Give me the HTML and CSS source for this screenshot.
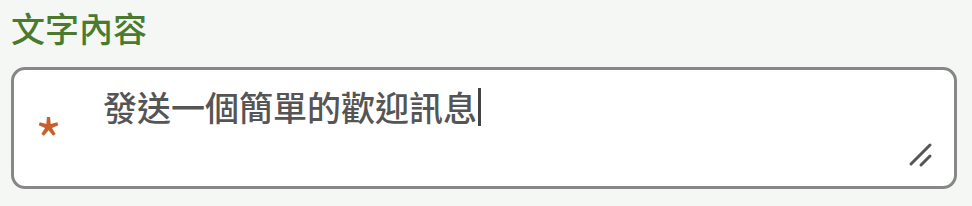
FILE: index.html
```html
<!DOCTYPE html>
<html lang="zh-Hant">
<head>
<meta charset="utf-8">
<link rel="stylesheet" href="styles.css">
</head>
<body>
<div class="field">
  <div class="label">文字內容</div>
  <div class="box">
    <span class="req">*</span>
    <div class="value">發送一個簡單的歡迎訊息<span class="caret"></span></div>
    <svg class="grip" width="26" height="26" viewBox="0 0 26 26">
      <line x1="3" y1="22" x2="22" y2="3" stroke="#555" stroke-width="3" stroke-linecap="round"/>
      <line x1="13" y1="23" x2="22" y2="14" stroke="#555" stroke-width="3" stroke-linecap="round"/>
    </svg>
  </div>
</div>
</body>
</html>
```
FILE: styles.css
```css
html, body { margin: 0; padding: 0; }
body {
  background: #f5f7f4;
  width: 972px;
  height: 206px;
  font-family: "Noto Sans CJK TC", "Noto Sans", sans-serif;
}
.field { padding: 7px 15px 0 11px; }
.label {
  color: #4a7a2e;
  font-size: 34px;
  font-weight: 500;
  line-height: 42px;
}
.box {
  position: relative;
  margin-top: 18px;
  height: 116px;
  border: 3px solid #878787;
  border-radius: 14px;
  background: #fff;
  display: flex;
  align-items: flex-start;
}
.req {
  color: #c8602e;
  font-size: 58px;
  font-weight: 400;
  margin: 43px 0 0 21px;
  line-height: 50px;
  width: 26px;
}
.value {
  color: #555;
  font-size: 34px;
  font-weight: 500;
  line-height: 42px;
  margin: 16px 0 0 42px;
  display: flex;
  align-items: center;
}
.caret {
  display: inline-block;
  width: 3px;
  height: 38px;
  background: #444;
  margin-left: 1px;
}
.grip {
  position: absolute;
  right: 20px;
  bottom: 18px;
}
```
